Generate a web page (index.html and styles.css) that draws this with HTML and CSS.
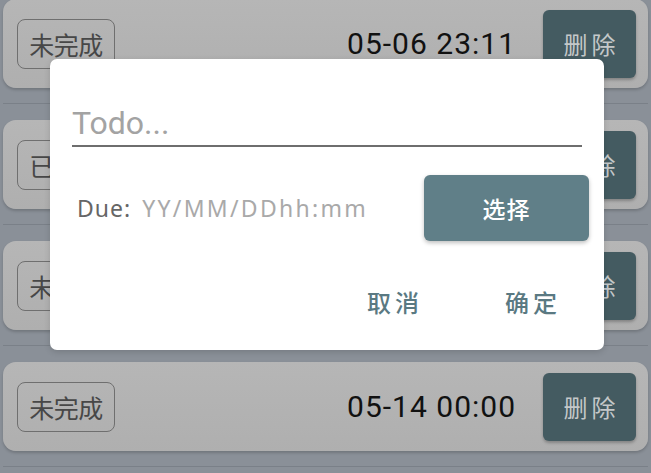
FILE: index.html
```html
<!DOCTYPE html>
<html lang="zh">
<head>
<meta charset="utf-8">
<title>Todo</title>
<link rel="stylesheet" href="styles.css">
</head>
<body>
<div class="list">
  <div class="item">
    <div class="card">
      <span class="tag">未完成</span>
      <span class="date">05-06 23:11</span>
      <span class="del">删除</span>
    </div>
  </div>
  <div class="item">
    <div class="card">
      <span class="tag">已完成</span>
      <span class="date">05-08 12:00</span>
      <span class="del">删除</span>
    </div>
  </div>
  <div class="item">
    <div class="card">
      <span class="tag">未完成</span>
      <span class="date">05-10 08:30</span>
      <span class="del">删除</span>
    </div>
  </div>
  <div class="item">
    <div class="card">
      <span class="tag">未完成</span>
      <span class="date">05-14 00:00</span>
      <span class="del">删除</span>
    </div>
  </div>
</div>

<div class="dialog">
  <div class="input">Todo...</div>
  <div class="due-row">
    <span class="due-label">Due:</span>
    <span class="due-value">YY/MM/DDhh:mm</span>
    <span class="pick">选择</span>
  </div>
  <div class="actions">
    <span class="action">取消</span>
    <span class="action">确定</span>
  </div>
</div>
</body>
</html>
```
FILE: styles.css
```css
html, body {
  margin: 0;
  padding: 0;
}
body {
  width: 651px;
  height: 473px;
  overflow: hidden;
  background: #8a9098;
  font-family: "Noto Sans", Roboto, "Noto Sans CJK SC", sans-serif;
}
.list {
  display: flex;
  flex-direction: column;
  margin-top: -1px;
}
.item {
  height: 121px;
  box-sizing: border-box;
  padding: 0 3px;
}
.item::after {
  content: "";
  display: block;
  height: 1px;
  margin-top: 15px;
  background: #7a8088;
}
.card {
  height: 89px;
  box-sizing: border-box;
  background: linear-gradient(#b6b6b6, #afafaf);
  border-radius: 13px;
  box-shadow: 0 2px 3px rgba(0, 0, 0, 0.18);
  display: flex;
  align-items: center;
  padding: 0 12px 0 14px;
}
.tag {
  font-family: "Noto Sans CJK SC", sans-serif;
  font-size: 25px;
  line-height: 30px;
  color: #474747;
  border: 1.5px solid #6f6f6f;
  border-radius: 8px;
  height: 50px;
  width: 98px;
  box-sizing: border-box;
  display: flex;
  align-items: center;
  justify-content: center;
  letter-spacing: -0.5px;
}
.date {
  margin-left: auto;
  font-family: Roboto, sans-serif;
  font-size: 30px;
  line-height: 36px;
  color: #111;
  letter-spacing: 1px;
  margin-right: 27px;
}
.del {
  width: 93px;
  height: 68px;
  box-sizing: border-box;
  padding-left: 4px;
  border-radius: 6px;
  background: #445b61;
  color: #c4c8c9;
  font-family: "Noto Sans CJK SC", sans-serif;
  font-size: 24px;
  line-height: 30px;
  letter-spacing: 4px;
  display: flex;
  align-items: center;
  justify-content: center;
  box-shadow: 0 2px 3px rgba(0, 0, 0, 0.25);
}

.dialog {
  position: absolute;
  left: 50px;
  top: 59px;
  width: 554px;
  height: 291px;
  box-sizing: border-box;
  background: #fff;
  border-radius: 7px;
  padding: 0 22px;
  display: flex;
  flex-direction: column;
  box-shadow: 0 2px 6px rgba(0, 0, 0, 0.15);
}
.input {
  margin-top: 42px;
  border-bottom: 2px solid #6e6e6e;
  font-family: Roboto, sans-serif;
  font-size: 32px;
  color: #a3a3a3;
  line-height: 44px;
  height: 44px;
  width: 510px;
}
.due-row {
  display: flex;
  align-items: center;
  margin-top: 28px;
  padding-left: 5px;
  height: 66px;
}
.due-label {
  font-family: "Noto Sans", sans-serif;
  font-size: 23px;
  line-height: 30px;
  color: #666;
  letter-spacing: 1px;
}
.due-value {
  font-family: "Noto Sans", sans-serif;
  font-size: 23px;
  line-height: 30px;
  color: #a9a9a9;
  margin-left: 11px;
  letter-spacing: 2.3px;
}
.pick {
  margin-left: auto;
  margin-right: -7px;
  width: 165px;
  height: 66px;
  border-radius: 6px;
  background: #607f88;
  color: #fff;
  font-family: "Noto Sans CJK SC", sans-serif;
  font-size: 23px;
  line-height: 30px;
  font-weight: 500;
  letter-spacing: 1px;
  display: flex;
  align-items: center;
  justify-content: center;
  box-shadow: 0 2px 4px rgba(0, 0, 0, 0.25);
}
.actions {
  display: flex;
  justify-content: flex-end;
  gap: 82px;
  margin-top: 46px;
  padding-right: 21px;
}
.action {
  font-family: "Noto Sans CJK SC", sans-serif;
  font-size: 24px;
  line-height: 30px;
  font-weight: 500;
  color: #5a7982;
  letter-spacing: 4px;
}
```
